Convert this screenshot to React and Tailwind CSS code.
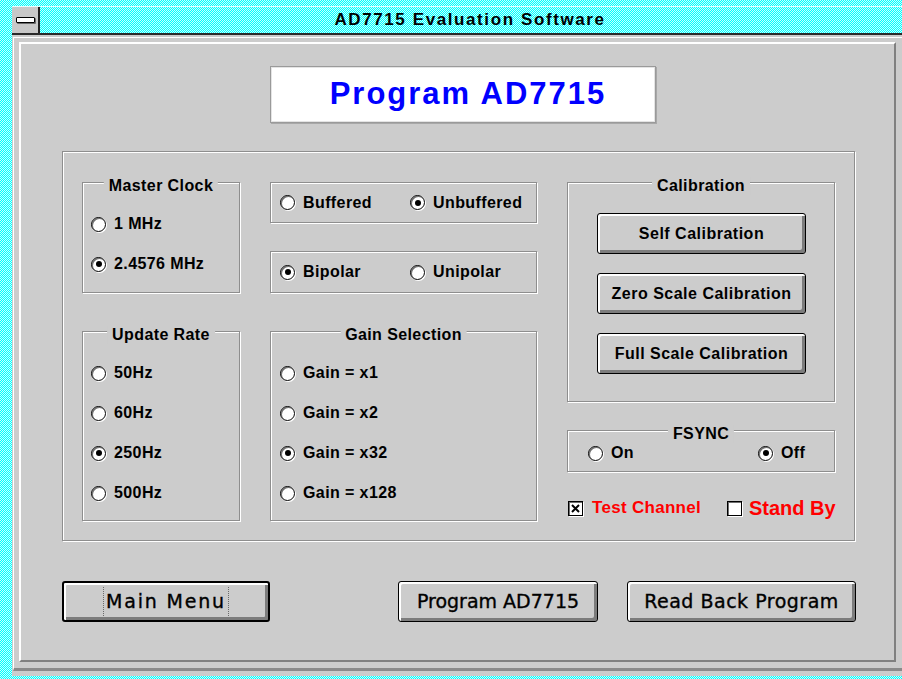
import React from "react";

const SANS = "font-['Liberation_Sans',Arial,sans-serif]";
const WIDE = "font-['DejaVu_Sans','Liberation_Sans',sans-serif]";

function Radio({ on }) {
  return (
    <span className="flex h-[15px] w-[15px] shrink-0 items-center justify-center rounded-full border border-black bg-white shadow-[inset_1px_1px_0_#6e6e6e,1px_1px_0_#ffffff]">
      {on ? <span className="h-[6px] w-[6px] rounded-full bg-black" /> : null}
    </span>
  );
}

function Option({ label, on, className = "" }) {
  return (
    <div className={`flex shrink-0 items-center gap-[8px] ${className}`}>
      <Radio on={on} />
      <span className="whitespace-nowrap text-[16px] font-bold leading-[18px] tracking-[0.4px] text-black">
        {label}
      </span>
    </div>
  );
}

function Check({ on }) {
  return (
    <span className="flex h-[15px] w-[15px] shrink-0 items-center justify-center border border-black bg-white shadow-[inset_1px_1px_0_#6e6e6e,1px_1px_0_#ffffff]">
      {on ? (
        <svg width="9" height="9" viewBox="0 0 9 9">
          <path d="M1 1L8 8M8 1L1 8" stroke="#000" strokeWidth="2" />
        </svg>
      ) : null}
    </span>
  );
}

function Group({ title, className = "", children }) {
  return (
    <div
      className={`relative shrink-0 border border-[#8e8e8e] shadow-[inset_1px_1px_0_#ffffff,1px_1px_0_#ffffff] ${className}`}
    >
      {title ? (
        <span className="absolute left-1/2 top-[-6px] -translate-x-1/2 whitespace-nowrap bg-[#cccccc] px-[5px] text-[16px] font-bold leading-[18px] tracking-[0.4px] text-black">
          {title}
        </span>
      ) : null}
      {children}
    </div>
  );
}

function Button({ children, className = "", heavy = false }) {
  return (
    <div
      className={`flex shrink-0 items-center justify-center rounded-[3px] bg-[#cccccc] ${
        heavy ? "border-2 border-black" : "border border-black"
      } shadow-[inset_2px_2px_0_#ffffff,inset_-3px_-3px_0_#7c7c7c] ${className}`}
    >
      {children}
    </div>
  );
}

function CalButton({ label }) {
  return (
    <Button className="h-[41px] w-[209px]">
      <span className="whitespace-nowrap text-[16px] font-bold tracking-[0.5px] text-black">{label}</span>
    </Button>
  );
}

export default function App() {
  return (
    <div
      className={`${SANS} h-[679px] w-[902px] overflow-hidden bg-[repeating-conic-gradient(#00ffff_0%_25%,#c8ffff_0%_50%)] bg-[length:2px_2px] pb-[3px] pl-[12px] pt-[6px]`}
    >
      <div className="flex h-full flex-col">
        {/* caption bar */}
        <div className="flex h-[29px] shrink-0 border-b-2 border-t border-b-[#2a2a2a] border-t-[#e8ffff]">
          <div className="flex w-[28px] items-center justify-center border-r-2 border-r-[#222222] bg-[#c8c8c8]">
            <span className="h-[6px] w-[19px] rounded-[1px] border border-black bg-white shadow-[1px_1px_0_#6a6a6a]" />
          </div>
          <div className="flex flex-1 items-center justify-center pr-[2px]">
            <span className="text-[17px] font-bold tracking-[1.6px] text-black">
              AD7715 Evaluation Software
            </span>
          </div>
        </div>

        {/* client area */}
        <div className="flex flex-1 bg-[#cccccc] pb-[5px] pl-[1px] pt-[2px]">
          <div className="flex flex-1 border-b-[3px] border-l border-t border-b-[#8a8a8a] border-l-white border-t-white pb-[6px] pl-[5px] pr-[6px] pt-[4px]">
            <div className="flex flex-1 flex-col border-2 border-b-[#808080] border-l-white border-r-[#808080] border-t-white">
              {/* heading */}
              <div className="ml-[249px] mt-[22px] flex h-[57px] w-[386px] shrink-0 items-center justify-center border border-[#9a9a9a] bg-white pl-[10px] shadow-[inset_1px_1px_0_#e4e4e4,inset_-1px_-1px_0_#e4e4e4,1px_1px_0_#a8a8a8]">
                <span className="text-[31px] font-bold tracking-[2px] text-[#0000ff]">Program AD7715</span>
              </div>

              {/* settings panel */}
              <div className="ml-[41px] mt-[28px] flex h-[390px] w-[793px] shrink-0 gap-[30px] border border-[#8e8e8e] pl-[19px] pt-[30px] shadow-[inset_1px_1px_0_#ffffff,1px_1px_0_#ffffff]">
                {/* column 1 */}
                <div className="flex w-[158px] shrink-0 flex-col gap-[38px]">
                  <Group title="Master Clock" className="h-[111px] pl-[8px] pt-[21px]">
                    <Option label="1 MHz" className="h-[40px]" />
                    <Option label="2.4576 MHz" on className="h-[40px]" />
                  </Group>
                  <Group title="Update Rate" className="h-[190px] pl-[8px] pt-[21px]">
                    <Option label="50Hz" className="h-[40px]" />
                    <Option label="60Hz" className="h-[40px]" />
                    <Option label="250Hz" on className="h-[40px]" />
                    <Option label="500Hz" className="h-[40px]" />
                  </Group>
                </div>

                {/* column 2 */}
                <div className="flex w-[267px] shrink-0 flex-col">
                  <Group className="flex h-[41px] items-center pl-[9px]">
                    <Option label="Buffered" className="w-[130px]" />
                    <Option label="Unbuffered" on />
                  </Group>
                  <Group className="mt-[28px] flex h-[42px] items-center pl-[9px]">
                    <Option label="Bipolar" on className="w-[130px]" />
                    <Option label="Unipolar" />
                  </Group>
                  <Group title="Gain Selection" className="mt-[38px] h-[190px] pl-[9px] pt-[21px]">
                    <Option label="Gain = x1" className="h-[40px]" />
                    <Option label="Gain = x2" className="h-[40px]" />
                    <Option label="Gain = x32" on className="h-[40px]" />
                    <Option label="Gain = x128" className="h-[40px]" />
                  </Group>
                </div>

                {/* column 3 */}
                <div className="flex w-[268px] shrink-0 flex-col">
                  <Group title="Calibration" className="flex h-[220px] flex-col gap-[19px] pl-[29px] pt-[30px]">
                    <CalButton label="Self Calibration" />
                    <CalButton label="Zero Scale Calibration" />
                    <CalButton label="Full Scale Calibration" />
                  </Group>
                  <Group title="FSYNC" className="mt-[28px] flex h-[42px] items-end pb-[9px] pl-[20px]">
                    <Option label="On" className="w-[170px]" />
                    <Option label="Off" on />
                  </Group>
                  <div className="mt-[21px] flex items-center whitespace-nowrap">
                    <div className="flex w-[160px] shrink-0 items-center gap-[9px] pl-[1px]">
                      <Check on />
                      <span className="text-[17px] font-bold tracking-[0.3px] text-[#ff0000]">Test Channel</span>
                    </div>
                    <div className="flex shrink-0 items-center gap-[7px]">
                      <Check />
                      <span className="text-[20px] font-bold text-[#ff0000]">Stand By</span>
                    </div>
                  </div>
                </div>
              </div>

              {/* command buttons */}
              <div className={`${WIDE} ml-[41px] mt-[40px] flex h-[41px] shrink-0 items-stretch`}>
                <Button heavy className="w-[208px]">
                  <span className="border-x border-dotted border-x-[#6a6a6a] px-[2px] text-[19px] tracking-[1.8px] text-black [-webkit-text-stroke:0.35px_#000]">
                    Main Menu
                  </span>
                </Button>
                <Button className="ml-[128px] w-[200px]">
                  <span className="text-[19px] text-black [-webkit-text-stroke:0.35px_#000]">Program AD7715</span>
                </Button>
                <Button className="ml-[29px] w-[229px]">
                  <span className="text-[19px] tracking-[0.5px] text-black [-webkit-text-stroke:0.35px_#000]">
                    Read Back Program
                  </span>
                </Button>
              </div>
            </div>
          </div>
        </div>
      </div>
    </div>
  );
}
